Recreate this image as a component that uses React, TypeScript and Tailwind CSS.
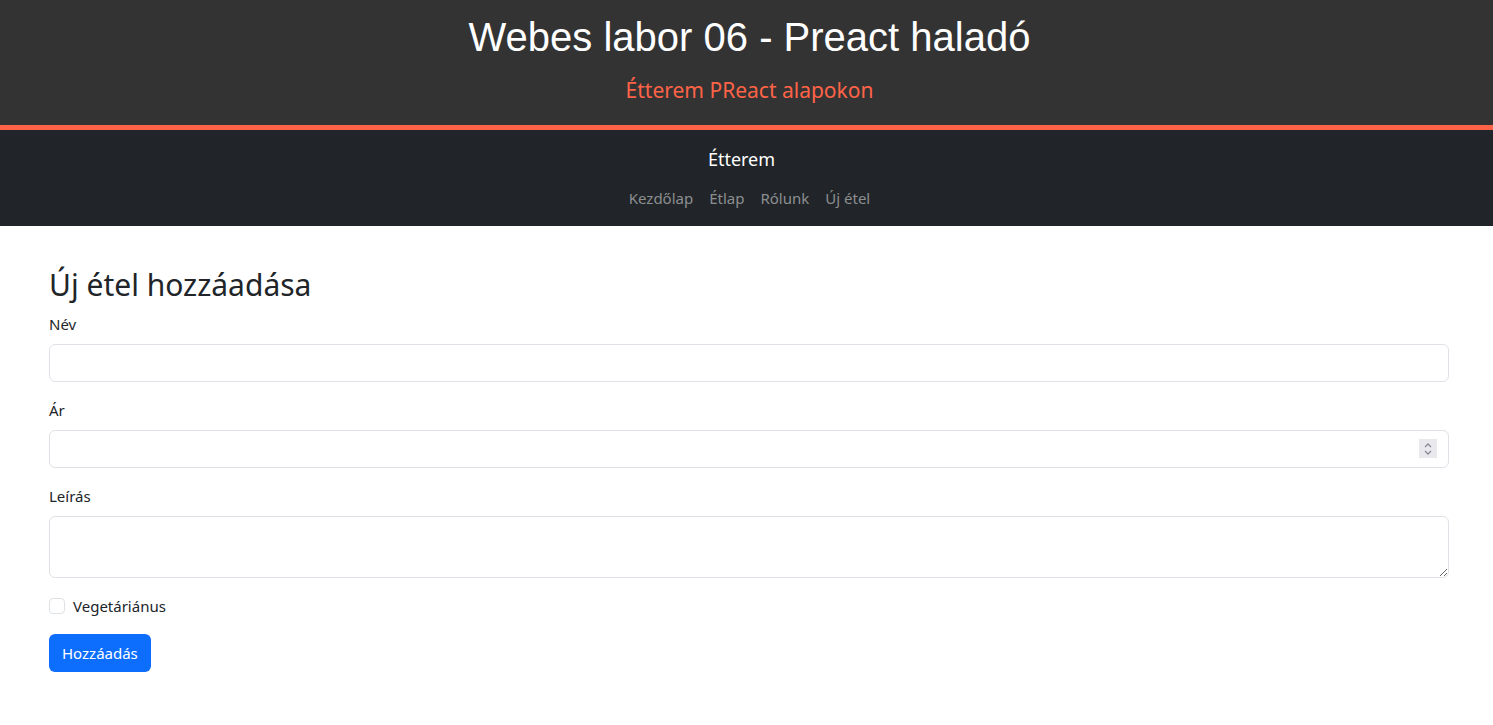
import React from 'react';

const sans = "font-['Noto_Sans',sans-serif]";

const Field = ({ label, children }: { label: string; children: React.ReactNode }) => (
  <div className="mb-4">
    <label className="block mb-2 text-[15px] leading-6 text-[#212529]">{label}</label>
    {children}
  </div>
);

const App = () => {
  return (
    <div className={`min-h-screen bg-white ${sans}`}>
      <header className="h-[130px] pl-[6px] bg-[#333333] border-b-[5px] border-[#ff6347] flex flex-col items-center">
        <h1 className="mt-[13px] text-[40px] leading-[48px] text-white font-['Liberation_Sans',Arial,sans-serif]">
          Webes labor 06 - Preact haladó
        </h1>
        <p className="mt-[14px] text-[21px] leading-[30px] text-[#ff6347]">Étterem PReact alapokon</p>
      </header>
      <nav className="h-24 pl-[6px] bg-[#212529] flex flex-col items-center">
        <div className="mt-[14px] mr-4 text-[18px] leading-[30px] text-white">Étterem</div>
        <ul className="mt-[12px] flex gap-4 text-[15px] leading-6 text-[#8c8e90]">
          <li className="cursor-pointer">Kezdőlap</li>
          <li className="cursor-pointer">Étlap</li>
          <li className="cursor-pointer">Rólunk</li>
          <li className="cursor-pointer">Új étel</li>
        </ul>
      </nav>
      <main className="pt-10 pl-[49px] pr-[44px]">
        <h2 className="mb-2 text-[30px] leading-[38px] text-[#212529]">Új étel hozzáadása</h2>
        <Field label="Név">
          <input type="text" className="block w-full h-[38px] px-3 border border-[#dee2e6] rounded-md outline-none" />
        </Field>
        <Field label="Ár">
          <div className="relative">
            <input type="text" className="block w-full h-[38px] px-3 border border-[#dee2e6] rounded-md outline-none" />
            <div className="absolute right-[12px] top-[9px] w-[18px] h-[19px] bg-[#e9e9ed] flex flex-col items-center justify-center">
              <svg width="10" height="14" viewBox="0 0 10 14" fill="none" stroke="#8a8a96" strokeWidth="1.3">
                <path d="M2 5 L5 2 L8 5" />
                <path d="M2 9 L5 12 L8 9" />
              </svg>
            </div>
          </div>
        </Field>
        <Field label="Leírás">
          <textarea className="block w-full h-[62px] px-3 py-1.5 border border-[#dee2e6] rounded-md outline-none" />
        </Field>
        <div className="mb-4 h-6 flex items-center gap-2">
          <span className="w-4 h-4 border border-[#dee2e6] rounded-[4px] bg-white" />
          <span className="text-[15px] leading-6 text-[#212529]">Vegetáriánus</span>
        </div>
        <button className="h-[38px] px-[13px] rounded-md bg-[#0d6efd] text-white text-[15px]">Hozzáadás</button>
      </main>
    </div>
  );
};

export default App;
